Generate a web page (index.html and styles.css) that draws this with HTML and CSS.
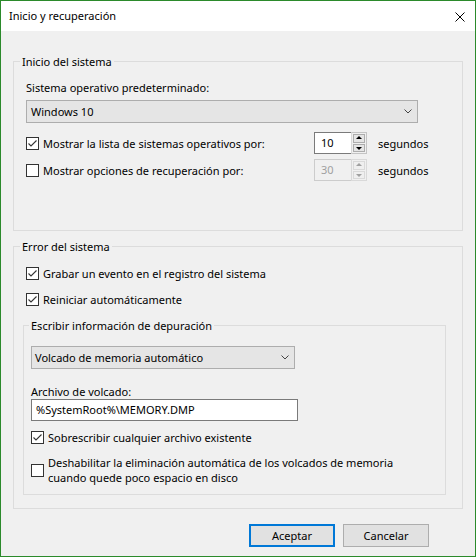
FILE: index.html
```html
<!DOCTYPE html>
<html>
<head>
    <meta charset="UTF-8">
    <title>Inicio y recuperación</title>
    <link rel="stylesheet" href="styles.css">
</head>
<body>
<div class="window">
    <div class="titlebar">
        <span class="title">Inicio y recuperación</span>
        <svg class="close" width="10" height="10" viewBox="0 0 10 10">
            <path d="M0.5 0.5 L9.5 9.5 M9.5 0.5 L0.5 9.5" stroke="#000" stroke-width="1" fill="none"/>
        </svg>
    </div>

    <div class="dialog">
        <!-- Inicio del sistema -->
        <fieldset class="group startup">
            <legend>Inicio del sistema</legend>
            <div class="label">Sistema operativo predeterminado:</div>
            <div class="combo os-combo">
                <span>Windows 10</span>
                <svg class="chevron" width="8" height="5" viewBox="0 0 8 5"><polyline points="0.5,0.5 4,4 7.5,0.5" fill="none" stroke="#444" stroke-width="1"/></svg>
            </div>

            <div class="timer-row first">
                <label class="check">
                    <span class="box"><svg width="11" height="11" viewBox="0 0 11 11"><polyline points="1.5,5.5 4,8 9.5,2.5" fill="none" stroke="#333" stroke-width="1.1"/></svg></span>
                    Mostrar la lista de sistemas operativos por:
                </label>
                <div class="spin">
                    <div class="spin-edit">10</div>
                    <div class="spin-arrows">
                        <span class="arrow up"></span>
                        <span class="arrow down"></span>
                    </div>
                </div>
                <span class="unit">segundos</span>
            </div>

            <div class="timer-row">
                <label class="check">
                    <span class="box"></span>
                    Mostrar opciones de recuperación por:
                </label>
                <div class="spin disabled">
                    <div class="spin-edit">30</div>
                    <div class="spin-arrows">
                        <span class="arrow up"></span>
                        <span class="arrow down"></span>
                    </div>
                </div>
                <span class="unit">segundos</span>
            </div>
        </fieldset>

        <!-- Error del sistema -->
        <fieldset class="group failure">
            <legend>Error del sistema</legend>
            <label class="check row">
                <span class="box"><svg width="11" height="11" viewBox="0 0 11 11"><polyline points="1.5,5.5 4,8 9.5,2.5" fill="none" stroke="#333" stroke-width="1.1"/></svg></span>
                Grabar un evento en el registro del sistema
            </label>
            <label class="check row second">
                <span class="box"><svg width="11" height="11" viewBox="0 0 11 11"><polyline points="1.5,5.5 4,8 9.5,2.5" fill="none" stroke="#333" stroke-width="1.1"/></svg></span>
                Reiniciar automáticamente
            </label>

            <fieldset class="group debug">
                <legend>Escribir información de depuración</legend>
                <div class="combo dump-combo">
                    <span>Volcado de memoria automático</span>
                    <svg class="chevron" width="8" height="5" viewBox="0 0 8 5"><polyline points="0.5,0.5 4,4 7.5,0.5" fill="none" stroke="#444" stroke-width="1"/></svg>
                </div>
                <div class="label dump-label">Archivo de volcado:</div>
                <div class="textbox">%SystemRoot%\MEMORY.DMP</div>
                <label class="check overwrite">
                    <span class="box"><svg width="11" height="11" viewBox="0 0 11 11"><polyline points="1.5,5.5 4,8 9.5,2.5" fill="none" stroke="#333" stroke-width="1.1"/></svg></span>
                    Sobrescribir cualquier archivo existente
                </label>
                <label class="check lowspace">
                    <span class="box"></span>
                    <span>Deshabilitar la eliminación automática de los volcados de memoria<br>cuando quede poco espacio en disco</span>
                </label>
            </fieldset>
        </fieldset>

        <div class="buttons">
            <button class="btn default">Aceptar</button>
            <button class="btn">Cancelar</button>
        </div>
    </div>
</div>
</body>
</html>
```
FILE: styles.css
```css
* { box-sizing: border-box; }
body { margin: 0; font: 11px/15px "Noto Sans", sans-serif; color: #000; }

.window { width: 476px; height: 557px; border: 1px solid #2b8a2b; background: #f0f0f0; display: flex; flex-direction: column; }
.titlebar { height: 30px; background: #fff; display: flex; align-items: flex-start; padding: 7px 10px 0 8px; }
.title { flex: 1; }
.close { margin-top: 4px; }

.dialog { padding: 23px 12px 0 12px; }

/* group boxes */
.group { margin: 0; border: 1px solid #dcdcdc; min-width: 0; }
.group legend { padding: 0 2px; line-height: 15px; }
.startup { padding: 11px 0 49px 12px; }
.startup legend { margin-left: -6px; }
.failure { margin-top: 8px; padding: 12px 0 13px 9px; }
.failure legend { margin-left: -3px; }
.debug { margin: 11px 16px 0 0; padding: 13px 0 9px 7px; }
.debug legend { margin-left: -2px; }

.label { height: 15px; }

/* drop-down lists */
.combo { height: 23px; border: 1px solid #adadad; background: #e5e5e5; display: flex; align-items: center; padding: 0 5px 0 4px; }
.combo span { flex: 1; }
.os-combo { width: 392px; margin-top: 5px; }
.dump-combo { width: 264px; padding-left: 3px; }

/* check boxes */
.check { display: flex; align-items: center; }
.box { width: 13px; height: 13px; border: 1px solid #333; background: #fff; margin-right: 4px; flex: none; display: flex; }
.row { margin-left: 3px; }
.row.second { margin-top: 11px; }

/* timeout rows */
.timer-row { display: flex; align-items: center; height: 22px; margin-top: 5px; }
.timer-row.first { margin-top: 9px; }
.timer-row .check { width: 288px; }
.unit { margin-left: 11px; }

.spin { display: flex; width: 53px; height: 22px; }
.spin-edit { width: 37px; border: 1px solid #7a7a7a; border-right: none; background: #fff; padding-left: 6px; line-height: 20px; }
.spin-arrows { width: 16px; border: 1px solid #c4c4c4; border-left: 1px solid #d9d9d9; background: #f0f0f0; display: flex; flex-direction: column; padding: 1px; gap: 1px; }
.arrow { flex: 1; border: 1px solid #adadad; background: #e5e5e5; position: relative; }
.arrow::after { content: ""; position: absolute; left: 50%; top: 50%; margin-left: -3px; border-left: 3px solid transparent; border-right: 3px solid transparent; }
.arrow.up::after { margin-top: -2px; border-bottom: 3px solid #000; }
.arrow.down::after { margin-top: -1px; border-top: 3px solid #000; }
.spin.disabled .spin-edit { border-color: #cccccc; background: #f0f0f0; color: #a0a0a0; }
.spin.disabled .spin-arrows { border-color: #d9d9d9; }
.spin.disabled .arrow { border-color: #d9d9d9; background: #efefef; }
.spin.disabled .arrow.up::after { border-bottom-color: #a0a0a0; }
.spin.disabled .arrow.down::after { border-top-color: #a0a0a0; }

/* dump file */
.dump-label { margin-top: 15px; }
.textbox { width: 267px; height: 22px; border: 1px solid #7a7a7a; background: #fff; padding-left: 4px; line-height: 20px; }
.overwrite { margin-top: 9px; }
.lowspace { margin-top: 10px; }

/* dialog buttons */
.buttons { display: flex; justify-content: flex-end; gap: 8px; margin: 15px 34px 0 0; }
.btn { width: 86px; height: 23px; border: 1px solid #adadad; background: #e1e1e1; font: inherit; color: #000; padding: 0; }
.btn.default { border: 2px solid #0078d7; }
```
